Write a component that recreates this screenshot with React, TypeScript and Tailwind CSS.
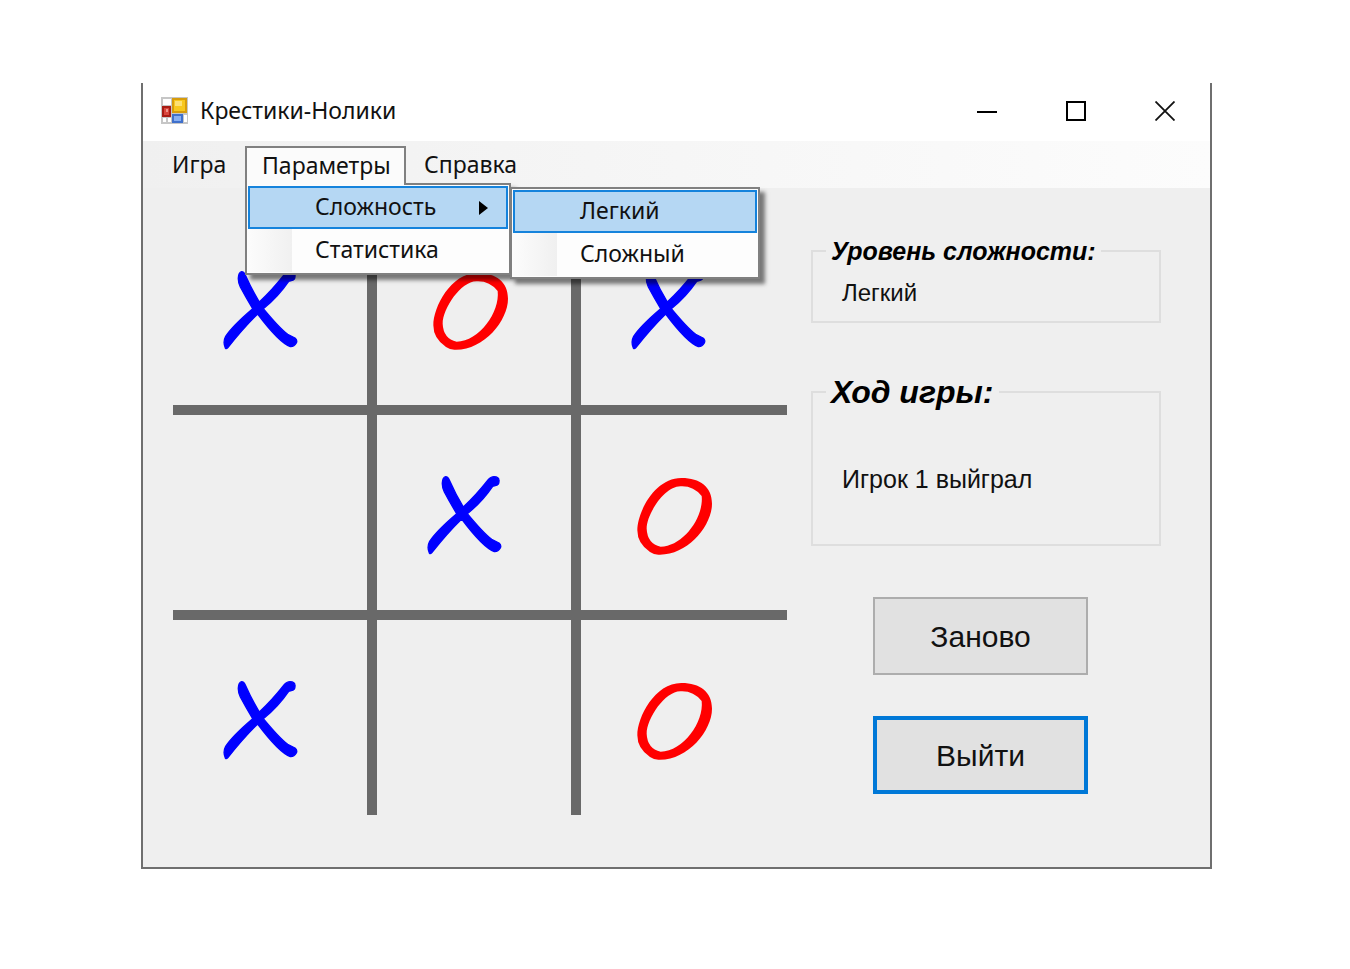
import React from 'react';

type Mark = 'X' | 'O' | null;

const board: Mark[] = ['X', 'O', 'X', null, 'X', 'O', 'X', null, 'O'];

function MarkShape({ mark }: { mark: 'X' | 'O' }) {
  if (mark === 'X') {
    return (
      <svg viewBox="45 36 276 252" className="h-[84px] w-[92px]" aria-hidden="true">
        <path
          fill="#0000ff"
          stroke="#0000ff"
          strokeWidth="4"
          strokeLinejoin="round"
          d="M97 62Q98 46 107 44Q114 44 119 56Q136 95 160 135Q198 100 234 54Q242 44 252 44Q267 44 267 56Q268 69 256 71L248 73Q216 120 172 155Q220 213 245 232L267 243Q275 250 271 258Q264 270 253 269Q218 255 155 171Q112 213 68 269Q62 278 58 273Q50 255 59 238Q78 208 140 155Q120 122 103 90Q96 75 97 62Z"
        />
      </svg>
    );
  }
  return (
    <svg viewBox="657 36 276 252" className="h-[84px] w-[92px]" aria-hidden="true">
      <path
        fill="#ff0000"
        fillRule="evenodd"
        d="M682 205C682 150 735 47 815 48C870 48 906 75 906 125C906 190 835 278 750 278Q735 280 720 270Q682 245 682 205ZM710 200C710 155 765 72 812 73Q850 71 875 102C882 165 820 253 752 254Q712 245 710 200Z"
      />
    </svg>
  );
}

function FormIcon() {
  return (
    <svg viewBox="0 0 27 27" className="h-[27px] w-[27px]" aria-hidden="true">
      <rect width="27" height="27" fill="#c6c6c6" />
      <path fill="#fff" d="M2 2h8v6H2zM2 21h3v4H2zM7 21h3v4H7zM23 18h3v7h-3z" />
      <rect x="1" y="9" width="9" height="11" fill="#a81c14" />
      <rect x="3" y="11" width="5" height="7" fill="#d9453c" />
      <rect x="5" y="12" width="2" height="3" fill="#f0968e" />
      <rect x="11" y="1" width="15" height="15" fill="#d79c0c" />
      <rect x="13" y="3" width="11" height="11" fill="#f8c81e" />
      <rect x="14" y="4" width="7" height="5" fill="#fde074" />
      <rect x="11" y="17" width="11" height="9" fill="#3f70cc" />
      <rect x="13" y="19" width="7" height="5" fill="#86aef2" />
    </svg>
  );
}

function MenuRow({ label, active, arrow }: { label: string; active?: boolean; arrow?: boolean }) {
  return (
    <button
      type="button"
      role="menuitem"
      className={
        active
          ? 'flex h-[43px] w-full items-center justify-between border-2 border-[#1583dc] bg-[#b5d7f3] pr-[18px] pl-[65px] text-left'
          : 'flex h-[43px] w-full items-center justify-between bg-[linear-gradient(90deg,#fcfcfc_0px,#f0f0f0_44px,#fdfdfd_44px)] pr-[18px] pl-[67px] text-left'
      }
    >
      <span className="pb-[3px]">{label}</span>
      {arrow && (
        <svg viewBox="0 0 9 14" className="h-[14px] w-[9px]" aria-hidden="true">
          <path d="M0 0L9 7L0 14Z" fill="#000" />
        </svg>
      )}
    </button>
  );
}

export default function App() {
  return (
    <main className="min-h-screen bg-white pt-[83px] pr-[138px] pb-24 pl-[141px] font-['Liberation_Sans',sans-serif] text-[#111]">
      <div className="border-2 border-t-0 border-[#6f6f6f] bg-[#efefef]">
        <header className="flex h-[58px] items-center justify-between bg-white pr-[35px] pb-[3px] pl-[18px]">
          <div className="flex items-center gap-3 font-['Noto_Sans',sans-serif] text-[23px]">
            <FormIcon />
            <h1>Крестики-Нолики</h1>
          </div>
          <div className="flex items-center gap-[69px]">
            <button type="button" aria-label="Свернуть">
              <svg viewBox="0 0 20 20" className="h-5 w-5">
                <path d="M0 11H20" stroke="#000" strokeWidth="2" />
              </svg>
            </button>
            <button type="button" aria-label="Развернуть">
              <svg viewBox="0 0 20 20" className="h-5 w-5">
                <rect x="1" y="1" width="18" height="18" fill="none" stroke="#000" strokeWidth="2" />
              </svg>
            </button>
            <button type="button" aria-label="Закрыть">
              <svg viewBox="0 0 20 20" className="h-5 w-5">
                <path d="M0.5 0.5L19.5 19.5M19.5 0.5L0.5 19.5" stroke="#111" strokeWidth="1.8" />
              </svg>
            </button>
          </div>
        </header>

        <nav
          role="menubar"
          className="flex h-[47px] items-start bg-linear-to-r from-[#f0f0f0] to-[#fcfcfc] pt-[5px] pl-3 font-['Noto_Sans',sans-serif] text-[23px] leading-[34px]"
        >
          <button type="button" role="menuitem" className="h-[38px] w-[90px] pb-[3px] pl-[17px] text-left">
            Игра
          </button>
          <div className="relative z-10 h-[38px] w-[161px]">
            <button
              type="button"
              role="menuitem"
              aria-expanded="true"
              className="relative z-20 h-[39px] w-full border-2 border-b-0 border-[#808080] bg-[#fbfbfb] pb-[6px] pl-[15px] text-left"
            >
              Параметры
            </button>
            <div
              role="menu"
              className="absolute top-[37px] left-0 w-[266px] border-2 border-[#808080] bg-[#fdfdfd] px-px py-px shadow-[5px_5px_4px_rgba(0,0,0,0.5)]"
            >
              <MenuRow label="Сложность" active arrow />
              <MenuRow label="Статистика" />
              <div
                role="menu"
                className="absolute top-[2px] left-[263px] w-[250px] border-2 border-[#808080] bg-[#fdfdfd] px-px py-px shadow-[5px_5px_4px_rgba(0,0,0,0.5)]"
              >
                <MenuRow label="Легкий" active />
                <MenuRow label="Сложный" />
              </div>
            </div>
          </div>
          <button type="button" role="menuitem" className="h-[38px] pb-[3px] pl-[18px] text-left">
            Справка
          </button>
        </nav>

        <div className="grid grid-cols-[614fr_350fr] gap-6 pt-[22px] pr-[49px] pb-[52px] pl-[30px]">
          <div className="grid grid-cols-[194fr_194fr_206fr] gap-[10px] bg-[#696969]">
            {board.map((mark, i) => (
              <button
                key={i}
                type="button"
                aria-label={`Клетка ${i + 1}`}
                className="flex h-[195px] items-start bg-[#efefef] pt-[59px] pl-12"
              >
                {mark && <MarkShape mark={mark} />}
              </button>
            ))}
          </div>

          <aside className="flex flex-col pt-[27px]">
            <fieldset className="h-[86px] border-2 border-[#dedede] px-[29px]">
              <legend className="-ml-4 px-[5px] text-[25px] leading-[28px] font-bold text-black italic">
                Уровень сложности:
              </legend>
              <p className="pt-3 text-[24px] leading-[32px]">Легкий</p>
            </fieldset>
            <fieldset className="mt-[51px] h-[172px] border-2 border-[#dedede] px-[29px]">
              <legend className="-ml-4 px-[5px] text-[32px] leading-[36px] font-bold text-black italic">
                Ход игры:
              </legend>
              <p className="pt-[53px] text-[25px] leading-[32px]">Игрок 1 выйграл</p>
            </fieldset>
            <div className="mt-[51px] flex flex-col items-center gap-[41px] pr-[11px]">
              <button
                type="button"
                className="h-[78px] w-[215px] border-2 border-[#adadad] bg-[#e1e1e1] text-[30px]"
              >
                Заново
              </button>
              <button
                type="button"
                className="h-[78px] w-[215px] border-4 border-[#0078d7] bg-[#e1e1e1] text-[30px]"
              >
                Выйти
              </button>
            </div>
          </aside>
        </div>
      </div>
    </main>
  );
}
